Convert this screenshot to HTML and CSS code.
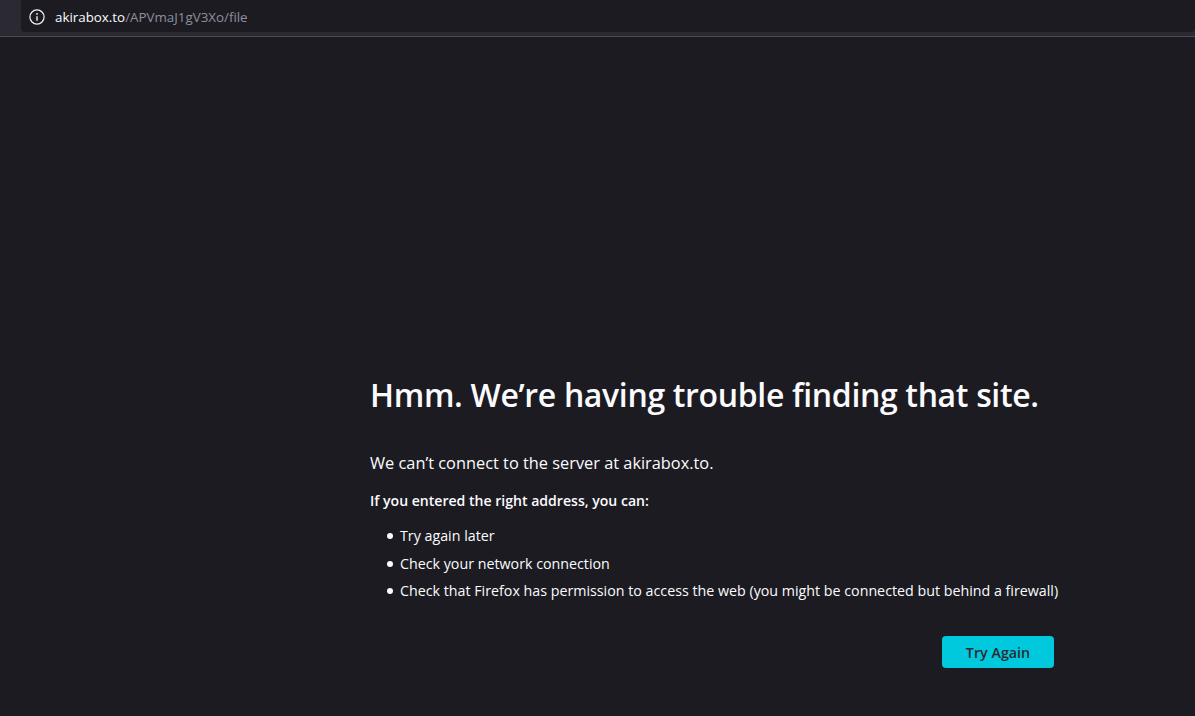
FILE: index.html
```html
<!DOCTYPE html>
<html lang="en">
<head>
<meta charset="utf-8">
<title>Server Not Found</title>
<link rel="stylesheet" href="styles.css">
</head>
<body>
<header class="toolbar">
  <div class="urlbar">
    <svg class="info" width="16" height="16" viewBox="0 0 16 16" fill="none" stroke="#f4f4f6" stroke-width="1.2"><circle cx="8" cy="8" r="7.1"/><path d="M8 7.2v4.6" stroke-width="1.4"/><path d="M8 4.1v1.6" stroke-width="1.4"/></svg>
    <span class="host">akirabox.to</span><span class="path">/APVmaJ1gV3Xo/file</span>
  </div>
</header>
<main class="page">
  <div class="content">
    <h1>Hmm. We’re having trouble finding that site.</h1>
    <p class="lead">We can’t connect to the server at akirabox.to.</p>
    <p class="strong">If you entered the right address, you can:</p>
    <ul>
      <li>Try again later</li>
      <li>Check your network connection</li>
      <li>Check that Firefox has permission to access the web (you might be connected but behind a firewall)</li>
    </ul>
    <div class="actions"><button>Try Again</button></div>
  </div>
</main>
</body>
</html>
```
FILE: styles.css
```css
* { box-sizing: border-box; }
html, body { margin: 0; height: 100%; overflow: hidden; }
body { background: #1c1b22; color: #fbfbfe; font-family: "Open Sans", "Noto Sans", sans-serif; display: flex; flex-direction: column; }
.toolbar { height: 37px; background: #2b2a33; border-bottom: 1px solid #4a4954; padding-left: 21px; flex: none; }
.urlbar { height: 32px; padding: 1px 0 0 8px; background: #1c1b22; display: flex; align-items: center; font-size: 13.35px; border-radius: 0 0 4px 4px; }
.info { margin-right: 10px; }
.host { color: #fbfbfe; }
.path { color: #8f8f9d; }
.page { flex: 1; padding: 339px 0 0 370px; }
.content { width: 684px; }
h1 { margin: 0; font-size: 32px; line-height: 38px; font-weight: 600; white-space: nowrap; letter-spacing: -0.34px; }
.lead { margin: 38px 0 0; font-size: 16.35px; line-height: 22px; }
.strong { margin: 17px 0 0; font-size: 14.07px; line-height: 20px; font-weight: 600; }
ul { margin: 15px 0 0; padding: 0 0 0 17px; font-size: 14.25px; line-height: 20px; list-style: none; }
li { margin-bottom: 7.5px; display: flex; align-items: center; gap: 7px; white-space: nowrap; }
li::before { content: ""; width: 6px; height: 6px; border-radius: 50%; background: #fbfbfe; flex: none; }
.actions { display: flex; justify-content: flex-end; margin-top: 35px; }
button { width: 112px; height: 32px; border: 0; border-radius: 4px; background: #00c8dd; color: #2b2a33; font: 600 14.3px "Open Sans", sans-serif; }
```
